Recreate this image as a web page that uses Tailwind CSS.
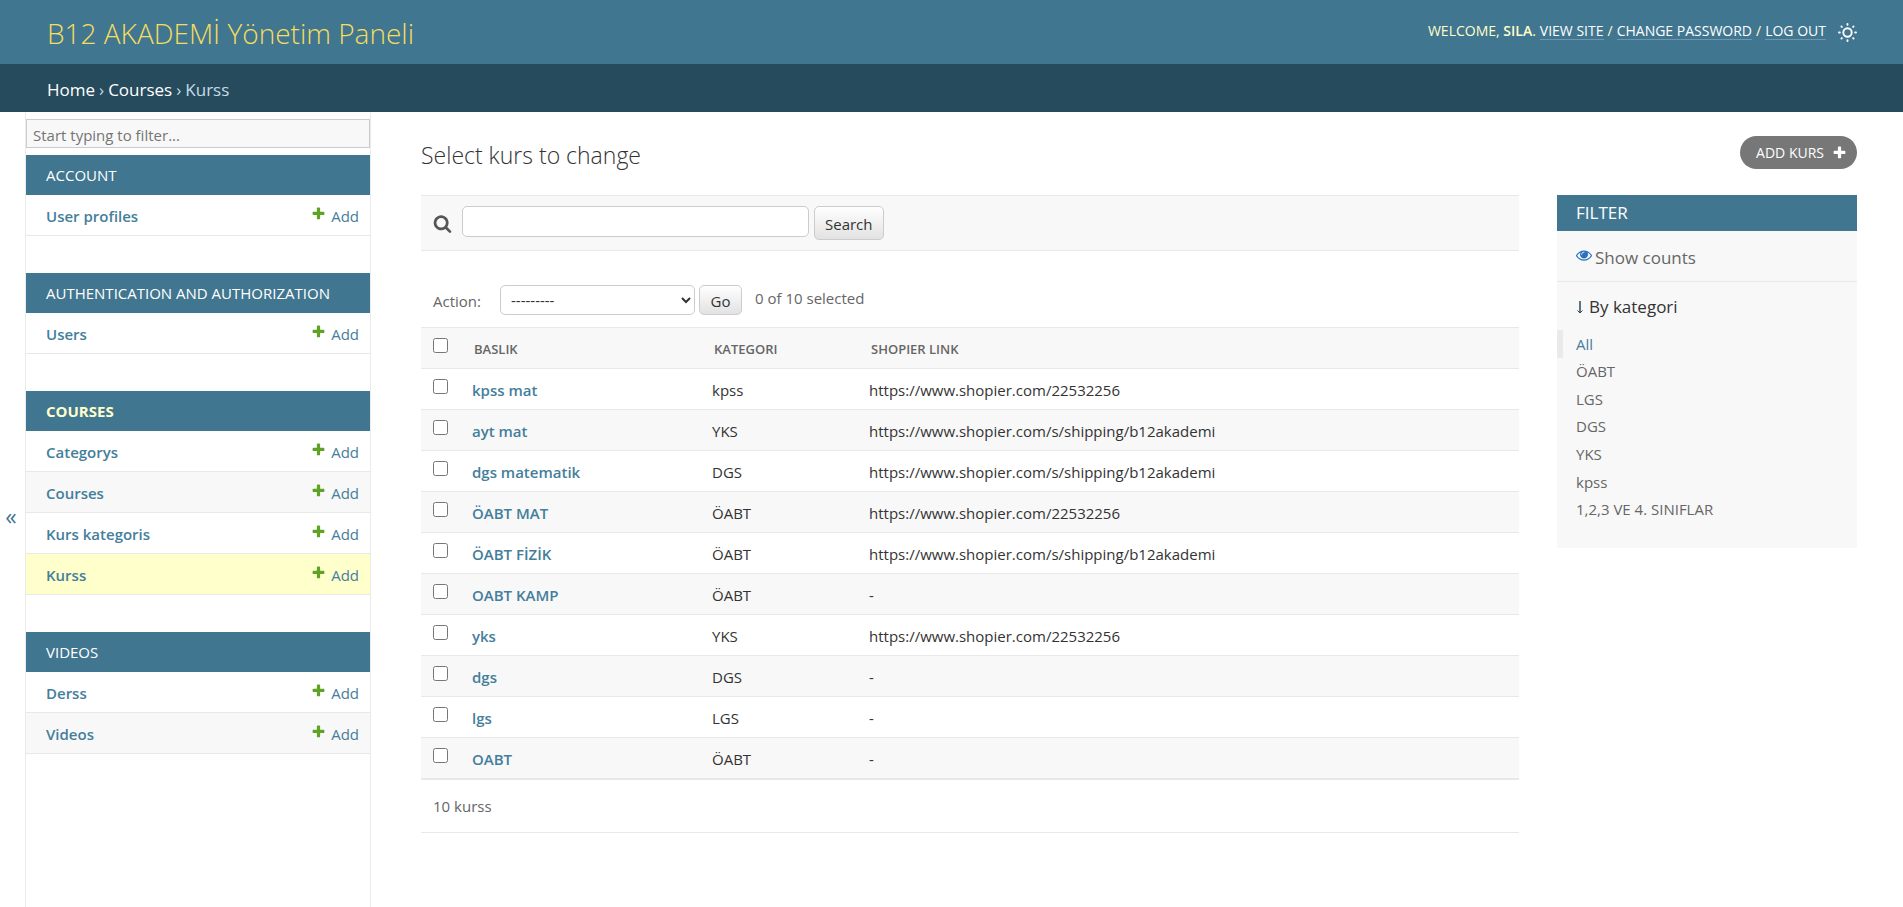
<!DOCTYPE html>
<html lang="en">
<head>
<meta charset="utf-8">
<meta name="viewport" content="width=device-width, initial-scale=1">
<title>Select kurs to change | B12 AKADEMİ Yönetim Paneli</title>
<script src="https://cdn.jsdelivr.net/npm/@tailwindcss/browser@4"></script>
</head>
<body class="flex min-h-screen flex-col bg-white font-['Open_Sans',sans-serif] text-[15px] leading-5 text-[#333]">
<svg class="hidden" aria-hidden="true">
  <symbol id="plus" viewBox="0 0 1792 1792"><path d="M1600 796v192q0 40-28 68t-68 28h-416v416q0 40-28 68t-68 28h-192q-40 0-68-28t-28-68v-416h-416q-40 0-68-28t-28-68v-192q0-40 28-68t68-28h416v-416q0-40 28-68t68-28h192q40 0 68 28t28 68v416h416q40 0 68 28t28 68z"/></symbol>
</svg>

<header class="flex h-16 shrink-0 items-center justify-between bg-[#417690] pr-[46px] pl-[47px] text-[#ffc]">
  <a href="#" class="pt-0.5 text-[28px] font-light leading-8 text-[#f5dd5d]">B12 AKADEMİ Yönetim Paneli</a>
  <div class="flex items-center gap-3 text-sm leading-4">
    <div class="flex gap-1 pb-0.5 uppercase">
      <span>Welcome, <strong class="font-semibold">sila</strong>.</span>
      <a href="#" class="border-b border-white/25 text-white">View site</a> /
      <a href="#" class="border-b border-white/25 text-white">Change password</a> /
      <button type="button" class="border-b border-white/25 uppercase text-white">Log out</button>
    </div>
    <button type="button" aria-label="Toggle theme" class="text-white">
      <svg class="size-[19px]" viewBox="0 0 24 24" fill="none" stroke="currentColor" stroke-width="2.400" stroke-linecap="round"><circle cx="12" cy="12" r="5.300"/><path d="M12 1.300v1M12 21.700v1M1.300 12h1M21.700 12h1M4.300 4.300l.6.600M19.100 19.100l.6.600M4.300 19.700l.6-.6M19.100 4.900l.6-.6"/></svg>
    </button>
  </div>
</header>

<nav aria-label="Breadcrumbs" class="flex h-12 shrink-0 items-center gap-1 bg-[#264b5d] px-[47px] pt-1 text-[17px] leading-5 text-[#c4dce8]">
  <a href="#" class="text-white">Home</a> ›
  <a href="#" class="text-white">Courses</a> › <span>Kurss</span>
</nav>

<div class="flex grow">
  <button type="button" aria-label="Toggle navigation" class="w-[25px] shrink-0 pt-3 pr-[3px] text-[23px] text-[#417690]">«</button>

  <nav aria-label="Sidebar" id="sidebar" class="w-[346px] shrink-0 border-x border-[#eaeaea] pt-[7px]">
    <input type="search" aria-label="Filter navigation items" placeholder="Start typing to filter..." class="mb-[7px] block h-[29px] w-full border border-[#ccc] bg-[#f8f8f8] px-1.5 pt-0.5 placeholder:text-[#757575]">
  </nav>

  <main class="min-w-0 grow px-[46px] pt-6 pl-[50px]">
    <div class="mb-[26px] flex h-[33px] items-center justify-between">
      <h1 class="pt-1 text-[23px] font-light">Select kurs to change</h1>
      <a href="#" class="flex h-[33px] items-center gap-2 rounded-full bg-[#777] pr-2.5 pl-4 text-sm uppercase text-white">Add kurs <svg class="size-[15px] fill-white"><use href="#plus"/></svg></a>
    </div>

    <div class="flex items-start gap-[38px]">
      <div class="min-w-0 grow">
        <form class="flex h-14 items-start gap-[5px] border-y border-[#e8e8e8] bg-[#f8f8f8] px-3 pt-2.5">
          <label for="q" class="pt-2 pr-[5px]">
            <svg role="img" aria-label="Search" class="size-[19px] fill-[#555]" viewBox="0 0 1792 1792"><path d="M1216 832q0-185-131.500-316.500t-316.500-131.500-316.500 131.500-131.500 316.500 131.500 316.500 316.500 131.500 316.500-131.500 131.500-316.500zm512 832q0 52-38 90t-90 38q-54 0-90-38l-343-342q-179 124-399 124-143 0-273.500-55.500t-225-150-150-225-55.500-273.500 55.500-273.500 150-225 225-150 273.500-55.500 273.500 55.500 225 150 150 225 55.500 273.500q0 220-124 399l343 343q37 37 37 90z"/></svg>
          </label>
          <input id="q" type="text" class="h-[31px] w-[347px] rounded-[5px] border border-[#ccc] bg-white px-2">
          <button type="button" class="h-[34px] rounded-[5px] border border-[#ccc] bg-linear-to-b from-white to-[#e2e2e2] px-2.5 pt-0.5">Search</button>
        </form>

        <form class="flex h-[76px] items-end gap-1 px-3 pb-3 text-[#666]">
          <label for="action" class="w-[63px] pb-1">Action:</label>
          <select id="action" class="h-[30px] w-[195px] rounded-[5px] border border-[#ccc] bg-white px-1.5 text-[#333]"><option>---------</option></select>
          <button type="button" class="h-[30px] w-[43px] rounded-[5px] border border-[#ccc] bg-linear-to-b from-white to-[#e2e2e2] pt-0.5 text-[#333]">Go</button>
          <span class="pb-[7px] pl-[9px]">0 of 10 selected</span>
        </form>

        <table class="w-full table-fixed border-separate border-spacing-0 text-left">
          <colgroup><col class="w-[42px]"><col class="w-[240px]"><col class="w-[157px]"><col></colgroup>
          <thead>
            <tr class="h-[42px] bg-[#f8f8f8] text-[13px] uppercase text-[#666] *:border-y *:border-[#e8e8e8]">
              <th class="pb-[5px] pl-3 font-normal"><input type="checkbox" aria-label="Select all" class="block size-[15px]"></th>
              <th class="pt-px pl-[11px] font-semibold">Baslik</th>
              <th class="pt-px pl-[11px] font-semibold">Kategori</th>
              <th class="pt-px pl-[11px] font-semibold">Shopier link</th>
            </tr>
          </thead>
          <tbody id="rows"></tbody>
        </table>
        <p class="flex h-[54px] items-center border-y border-[#e8e8e8] px-3 text-[#666]">10 kurss</p>
      </div>

      <aside aria-labelledby="filter-title" class="w-[300px] shrink-0 bg-[#f8f8f8] pb-[25px]">
        <h2 id="filter-title" class="flex h-9 items-center bg-[#417690] px-[19px] text-[17px] uppercase text-white">Filter</h2>
        <a href="#" class="flex h-[51px] items-center gap-[3px] border-b border-[#e8e8e8] px-[19px] pt-1 text-[17px] text-[#666]">
          <svg class="mb-1.5 size-4 fill-[#2b70bf]" viewBox="0 0 1792 1792"><path d="M1664 960q-152-236-381-353 61 104 61 225 0 185-131.500 316.500t-316.500 131.500-316.500-131.500-131.500-316.500q0-121 61-225-229 117-381 353 133 205 333.500 326.500t434.500 121.500 434.500-121.500 333.500-326.500zm-720-384q0-20-14-34t-34-14q-125 0-214.500 89.500t-89.500 214.500q0 20 14 34t34 14 34-14 14-34q0-86 61-147t147-61q20 0 34-14t14-34zm848 384q0 34-20 69-140 230-376.500 368.500t-499.500 138.500-499.500-139-376.500-368q-20-35-20-69t20-69q140-229 376.500-368t499.500-139 499.500 139 376.500 368q20 35 20 69z"/></svg>
          Show counts
        </a>
        <details open>
          <summary class="flex h-12 list-none items-center gap-[5px] px-[19px] pt-0.5 text-[17px]"><svg class="h-3.5 w-2 fill-none stroke-[#264b5d]" viewBox="0 0 8 14"><path d="M4 1v11.500" stroke-width="1.500"/><path d="M1.500 10.500l2.500 2.500 2.500-2.500"/></svg>By kategori</summary>
          <ul id="filters" class="grid h-[193px] text-[#666]"></ul>
        </details>
      </aside>
    </div>
  </main>
</div>

<script>
const groups = [
  ['Account', ['User profiles']],
  ['Authentication and Authorization', ['Users']],
  ['Courses', ['Categorys', 'Courses', 'Kurs kategoris', 'Kurss']],
  ['Videos', ['Derss', 'Videos']]
];
document.getElementById('sidebar').insertAdjacentHTML('beforeend', groups.map(([name, models]) => `
  <table class="mb-[37px] w-full border-separate border-spacing-0">
    <caption class="h-10 bg-[#417690] px-5 text-left leading-10 uppercase ${name === 'Courses' ? 'font-bold text-[#ffc]' : 'text-white'}"><a href="#">${name}</a></caption>
    <tbody>${models.map((m, i) => `
      <tr class="h-[41px] text-[#447e9b] *:border-b *:border-[#e8e8e8] ${m === 'Kurss' ? 'bg-[#ffc]' : i % 2 ? 'bg-[#f8f8f8]' : 'bg-white'}">
        <th scope="row" class="pt-0.5 pl-5 text-left font-semibold"><a href="#">${m}</a></th>
        <td class="pt-0.5 pr-[11px]"><a href="#" class="flex items-center justify-end gap-[5px]"><svg class="mb-1.5 size-[15px] fill-[#5fa225]"><use href="#plus"/></svg>Add</a></td>
      </tr>`).join('')}</tbody>
  </table>`).join(''));

const short = 'https://www.shopier.com/22532256', long = 'https://www.shopier.com/s/shipping/b12akademi';
const rows = [
  ['kpss mat', 'kpss', short], ['ayt mat', 'YKS', long], ['dgs matematik', 'DGS', long],
  ['ÖABT MAT', 'ÖABT', short], ['ÖABT FİZİK', 'ÖABT', long], ['OABT KAMP', 'ÖABT', '-'],
  ['yks', 'YKS', short], ['dgs', 'DGS', '-'], ['lgs', 'LGS', '-'], ['OABT', 'ÖABT', '-']
];
document.getElementById('rows').innerHTML = rows.map(([title, cat, link], i) => `
  <tr class="h-[41px] *:border-b *:border-[#e8e8e8] ${i % 2 ? 'bg-[#f8f8f8]' : 'bg-white'}">
    <td class="pb-[5px] pl-3"><input type="checkbox" aria-label="Select ${title}" class="block size-[15px]"></td>
    <th scope="row" class="pt-0.5 pl-[9px] font-semibold text-[#447e9b]"><a href="#">${title}</a></th>
    <td class="pt-0.5 pl-[9px]">${cat}</td>
    <td class="pt-0.5 pl-[9px]">${link}</td>
  </tr>`).join('');

document.getElementById('filters').innerHTML = ['All', 'ÖABT', 'LGS', 'DGS', 'YKS', 'kpss', '1,2,3 VE 4. SINIFLAR'].map((f, i) => `
  <li class="flex items-center ${i ? 'pl-[19px]' : 'border-l-[6px] border-[#eaeaea] pl-[13px] text-[#447e9b]'}"><a href="#">${f}</a></li>`).join('');
</script>
</body>
</html>
